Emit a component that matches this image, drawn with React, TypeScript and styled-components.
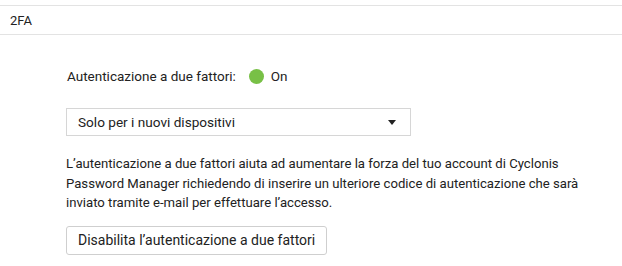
import styled, { createGlobalStyle } from "styled-components";

const GlobalStyle = createGlobalStyle`
  body {
    margin: 0;
    background: #fff;
    font-family: Roboto, "Liberation Sans", Arial, sans-serif;
    font-size: 13px;
    color: #222;
  }
`;

const Page = styled.div`
  width: 622px;
  height: 266px;
  padding-top: 5px;
  box-sizing: border-box;
  overflow: hidden;
`;

const SectionHeader = styled.div`
  height: 28px;
  border-top: 1px solid #e3e3e3;
  border-bottom: 1px solid #e3e3e3;
  display: flex;
  align-items: center;
  padding-left: 10px;
  font-size: 13px;
  color: #222;
`;

const Content = styled.div`
  display: flex;
  flex-direction: column;
  align-items: flex-start;
  padding-left: 66px;
`;

const StatusRow = styled.div`
  display: flex;
  align-items: center;
  margin-top: 31px;
  padding-left: 1px;
  height: 20px;
  font-size: 13.5px;
`;

const StatusDot = styled.span<{ $on: boolean }>`
  width: 15px;
  height: 15px;
  border-radius: 50%;
  background: ${(p) => (p.$on ? "#78c046" : "#ccc")};
  margin: 0 7px 0 13px;
`;

const Select = styled.div`
  margin-top: 22px;
  width: 345px;
  height: 28px;
  box-sizing: border-box;
  border: 1px solid #d6d6d6;
  display: flex;
  align-items: center;
  justify-content: space-between;
  padding: 0 14px 0 11px;
  font-size: 13.6px;
`;

const Caret = styled.span`
  width: 0;
  height: 0;
  border-left: 4.5px solid transparent;
  border-right: 4.5px solid transparent;
  border-top: 5px solid #222;
`;

const Description = styled.p`
  margin: 18px 0 0;
  width: 515px;
  line-height: 19.5px;
  font-size: 13.15px;
`;

const Button = styled.button`
  margin-top: 13px;
  height: 29px;
  box-sizing: border-box;
  padding: 0 11px;
  background: #fff;
  border: 1px solid #cfcfcf;
  border-radius: 3px;
  font-family: inherit;
  font-size: 14px;
  color: #222;
`;

const App = () => {
  return (
    <Page>
      <GlobalStyle />
      <SectionHeader>2FA</SectionHeader>
      <Content>
        <StatusRow>
          Autenticazione a due fattori:
          <StatusDot $on />
          On
        </StatusRow>
        <Select>
          <span>Solo per i nuovi dispositivi</span>
          <Caret />
        </Select>
        <Description>
          L’autenticazione a due fattori aiuta ad aumentare la forza del tuo account di Cyclonis
          Password Manager richiedendo di inserire un ulteriore codice di autenticazione che sarà
          inviato tramite e-mail per effettuare l’accesso.
        </Description>
        <Button>Disabilita l’autenticazione a due fattori</Button>
      </Content>
    </Page>
  );
};

export default App;
